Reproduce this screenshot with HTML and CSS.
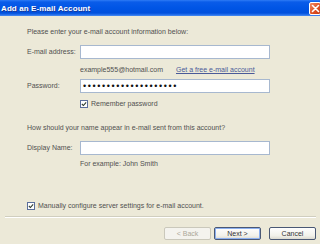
FILE: index.html
```html
<!DOCTYPE html>
<html>
<head>
<meta charset="utf-8">
<link rel="stylesheet" href="styles.css">
</head>
<body>
<div class="window">
  <div class="titlebar">
    <span class="title">Add an E-mail Account</span>
    <span class="close"><svg width="9" height="9" viewBox="0 0 9 9"><path d="M1.5 1.5 L7.5 7.5 M7.5 1.5 L1.5 7.5" stroke="#fff" stroke-width="1.6" stroke-linecap="round"/></svg></span>
  </div>
  <div class="content">
    <p class="intro">Please enter your e-mail account information below:</p>
    <div class="form">
      <label class="label">E-mail address:</label>
      <div class="input"></div>
      <div></div>
      <div class="hint"><span>example555@hotmail.com</span><a class="link">Get a free e-mail account</a></div>
      <label class="label">Password:</label>
      <div class="input pw">••••••••••••••••••••</div>
      <div></div>
      <div class="check"><span class="box"><svg width="7" height="7" viewBox="0 0 7 7"><path d="M1 3.5 L2.8 5.3 L6 1.5" fill="none" stroke="#2d3b2d" stroke-width="1.3"/></svg></span>Remember password</div>
    </div>
    <p class="question">How should your name appear in e-mail sent from this account?</p>
    <div class="form form2">
      <label class="label">Display Name:</label>
      <div class="input"></div>
      <div></div>
      <div class="hint">For example: John Smith</div>
    </div>
    <div class="check manual"><span class="box"><svg width="7" height="7" viewBox="0 0 7 7"><path d="M1 3.5 L2.8 5.3 L6 1.5" fill="none" stroke="#2d3b2d" stroke-width="1.3"/></svg></span>Manually configure server settings for e-mail account.</div>
  </div>
  <div class="sep"></div>
  <div class="buttons">
    <button class="btn disabled">&lt; Back</button>
    <button class="btn default">Next &gt;</button>
    <button class="btn cancel">Cancel</button>
  </div>
</div>
</body>
</html>
```
FILE: styles.css
```css
* { box-sizing: border-box; }
html, body { margin: 0; padding: 0; }
body {
  width: 320px;
  height: 244px;
  overflow: hidden;
  background: #ECE9D8;
  font-family: "Liberation Sans", Arial, sans-serif;
  font-size: 7px;
  color: #505050;
}
.window { display: flex; flex-direction: column; height: 244px; }
.titlebar {
  height: 16px;
  display: flex;
  align-items: center;
  justify-content: space-between;
  background: linear-gradient(#2f7bf5 0, #0a5ce9 2px, #0055e5 8px, #0050dd 13px, #2a74ee 15px, #4e8ff0 16px);
  padding-left: 1px;
}
.title {
  color: #fff;
  font-weight: bold;
  font-size: 8px;
  letter-spacing: 0.1px;
  text-shadow: 1px 1px 0 #1a3a9a;
}
.close {
  width: 12px;
  height: 13px;
  margin-right: -1px;
  border: 1px solid #fff;
  border-radius: 2px;
  background: linear-gradient(135deg, #f08a64, #dd4f22 60%, #c43d18);
  display: flex;
  align-items: center;
  justify-content: center;
}
.close svg { display: block; }
.content { padding-left: 27px; }
.intro { margin: 12px 0 0; line-height: 8px; }
.form {
  display: grid;
  grid-template-columns: 53px 190px;
  align-items: center;
  margin-top: 9px;
}
.label { line-height: 14px; }
.input {
  height: 14px;
  background: #fff;
  border: 1px solid #a7b8cf;
}
.hint {
  display: flex;
  gap: 13px;
  height: 20px;
  align-items: center;
  padding-top: 1px;
}
.link { color: #4a5a98; text-decoration: underline; }
.pw {
  font-size: 9px;
  line-height: 12px;
  letter-spacing: 1.6px;
  padding-left: 2px;
  color: #111;
  overflow: hidden;
  white-space: nowrap;
}
.check {
  display: flex;
  align-items: center;
  gap: 3px;
  height: 9px;
  margin-top: 6px;
}
.box {
  width: 8px;
  height: 8px;
  border: 1px solid #5b6f9c;
  background: #fff;
  display: flex;
  align-items: center;
  justify-content: center;
}
.box svg { display: block; width: 6px; height: 6px; }
.question { margin: 16px 0 0; line-height: 8px; }
.form2 { margin-top: 9px; }
.form2 .hint { height: 16px; }
.manual { margin-top: 30px; }
.sep {
  margin: 6px 4px 0 5px;
  height: 2px;
  border-top: 1px solid #d0cebf;
  border-bottom: 1px solid #fff;
}
.buttons {
  display: flex;
  justify-content: flex-end;
  gap: 3px;
  padding-right: 4px;
  margin-top: 9px;
}
.btn {
  width: 47px;
  height: 13px;
  padding: 0;
  font-family: "Liberation Sans", Arial, sans-serif;
  font-size: 7px;
  color: #333;
  border: 1px solid #4a5874;
  border-radius: 2px;
  background: linear-gradient(#fefefe, #f2f1ea 70%, #dcdad0);
}
.btn.default {
  box-shadow: inset 0 0 0 1px #8cb0f0;
}
.btn.cancel { margin-left: 5px; }
.btn.disabled {
  color: #aca899;
  border-color: #cac8bb;
  background: #f4f3ee;
}
```
